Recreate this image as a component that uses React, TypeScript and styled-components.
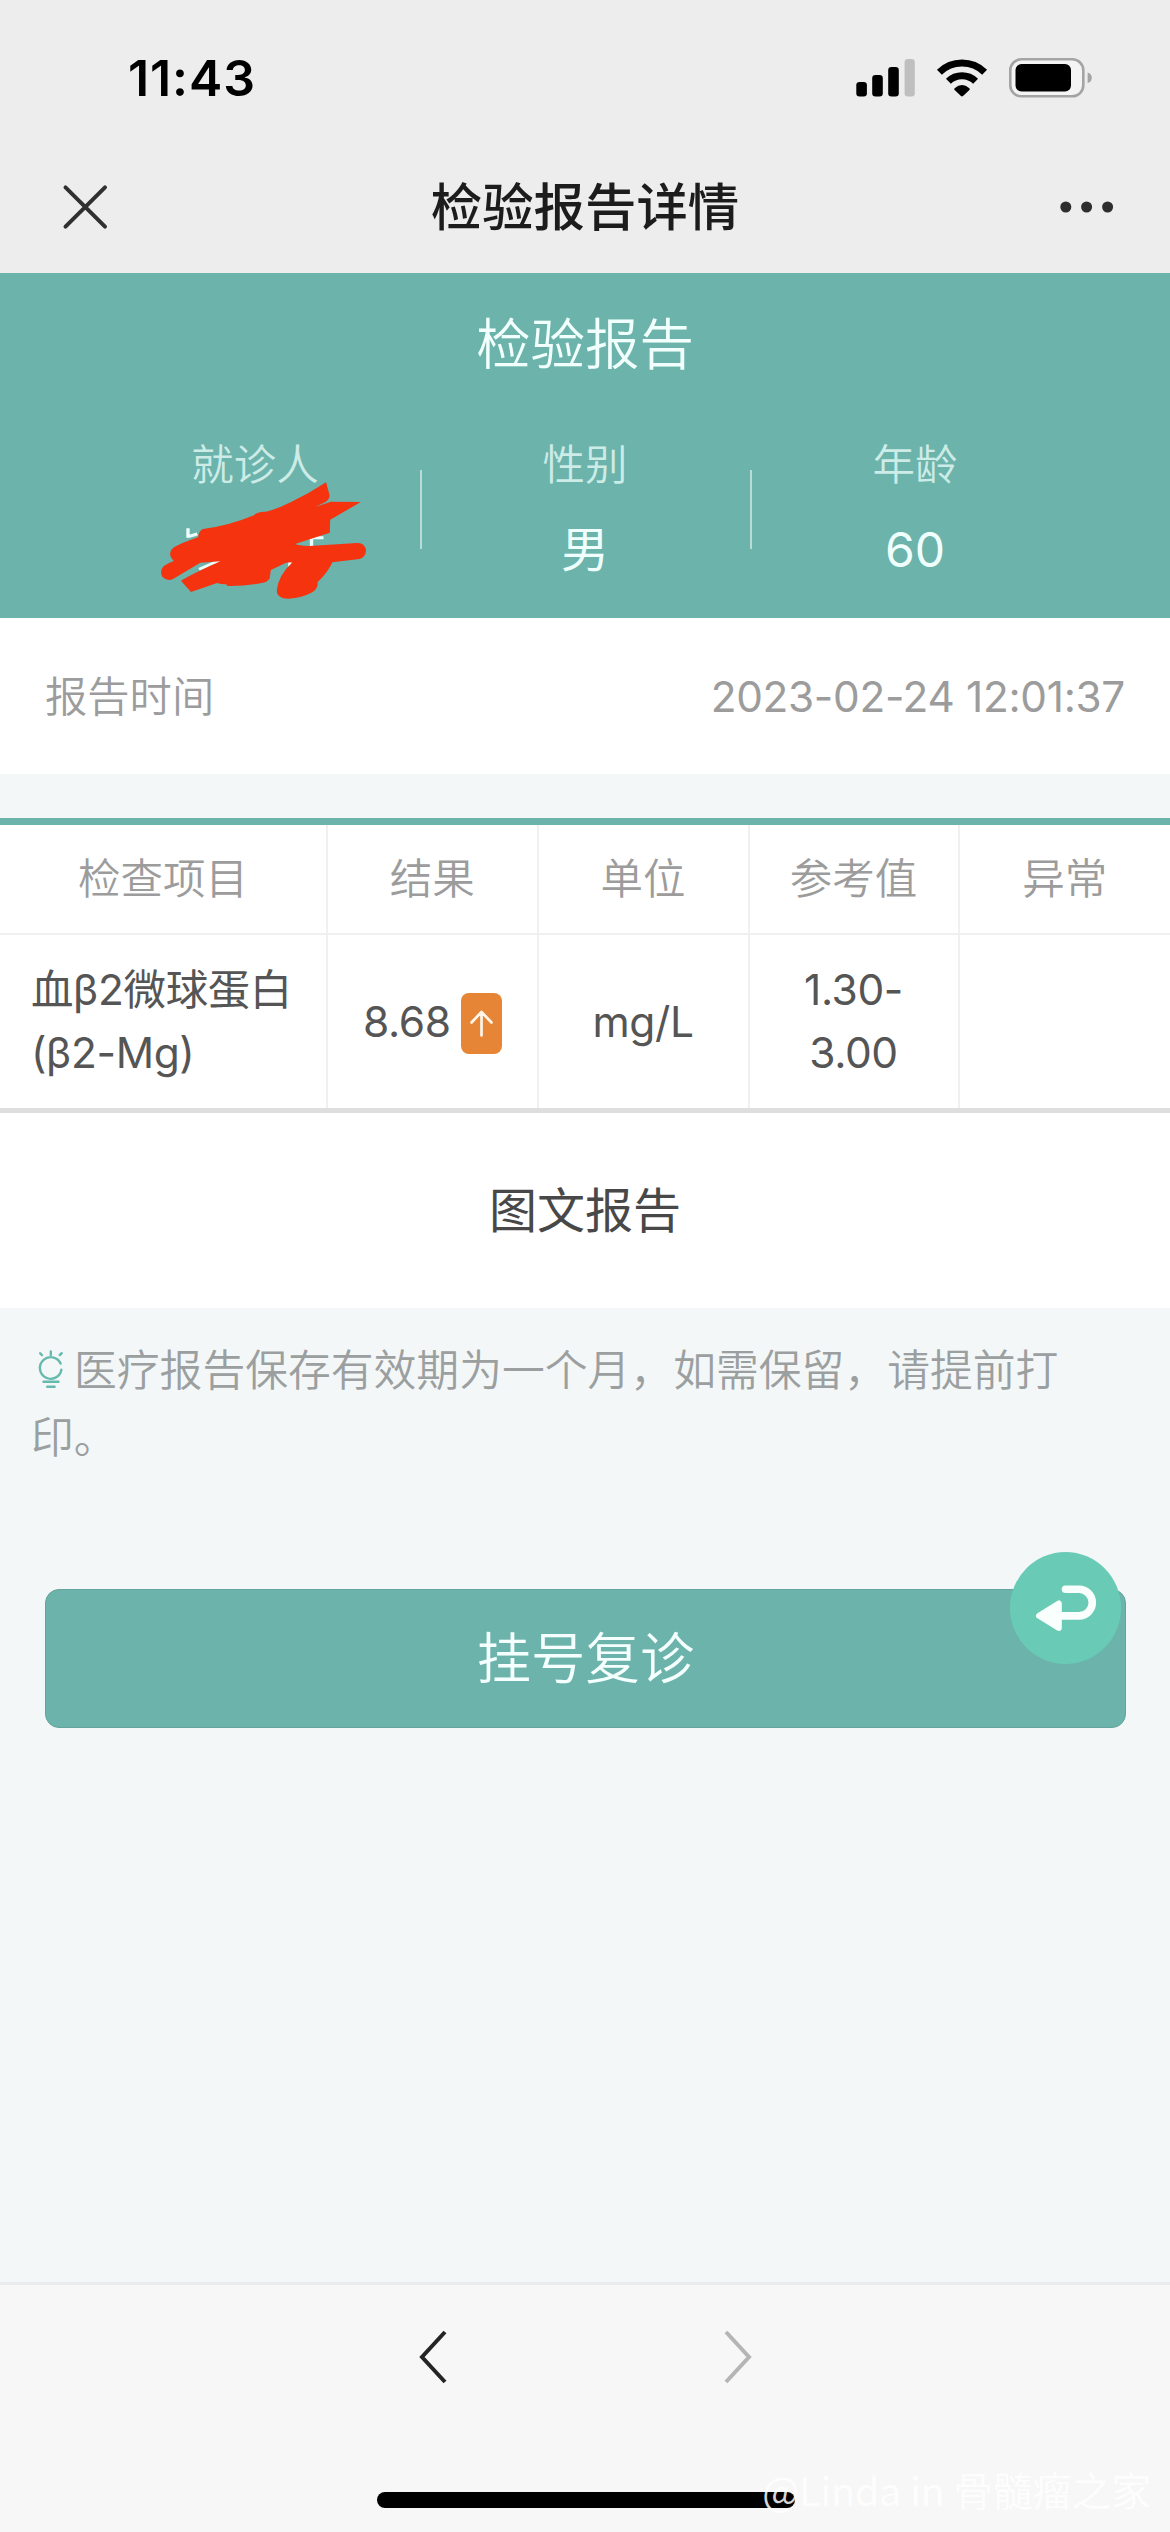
import React from "react";
import styled, { createGlobalStyle } from "styled-components";

const teal = "#6bb3ab";
const cjk = `Inter, "Noto Sans CJK SC", sans-serif`;

const GlobalStyle = createGlobalStyle`
  * { box-sizing: border-box; }
  body { margin: 0; background: #f3f7f8; font-family: ${cjk}; }
`;

const Page = styled.main`
  position: relative;
  display: flex;
  flex-direction: column;
  width: 1170px;
  height: 2532px;
  overflow: hidden;
  background: #f3f7f8;
`;

const TopArea = styled.header`
  height: 273px;
  background: #ededed;
`;

const StatusBar = styled.div`
  display: flex;
  align-items: center;
  justify-content: space-between;
  height: 156px;
  padding: 0 78px 0 128px;
`;

const Clock = styled.time`
  font-size: 50px;
  font-weight: 600;
  line-height: 60px;
  letter-spacing: 0.9px;
  color: #000;
`;

const StatusIcons = styled.svg`
  display: block;
  width: 236px;
  height: 40px;
`;

const TitleBar = styled.div`
  display: grid;
  grid-template-columns: 180px 1fr 180px;
  align-items: center;
  height: 102px;
`;

const CloseIcon = styled.svg`
  width: 46px;
  height: 46px;
  margin-left: 62px;
`;

const DotsIcon = styled.svg`
  width: 54px;
  height: 14px;
  justify-self: end;
  margin-right: 56px;
`;

const PageTitle = styled.h1`
  margin: 0;
  text-align: center;
  font-size: 51.4px;
  font-weight: 500;
  line-height: 70px;
  color: #1c1c1c;
`;

const Patient = styled.section`
  position: relative;
  display: flex;
  flex-direction: column;
  height: 345px;
  padding: 36px 90px 0;
  background: ${teal};
`;

const PatientTitle = styled.h2`
  margin: 0;
  text-align: center;
  font-size: 54.4px;
  font-weight: 350;
  line-height: 70px;
  color: #f1fffd;
`;

const PatientGrid = styled.div`
  display: grid;
  grid-template-columns: repeat(3, 330px);
  margin-top: 56px;
`;

const PatientField = styled.div`
  position: relative;
  display: flex;
  flex-direction: column;
  align-items: center;
  height: 150px;

  & + &::before {
    content: "";
    position: absolute;
    left: 0;
    top: 35px;
    width: 2px;
    height: 79px;
    background: #b9dcd7;
  }
`;

const FieldLabel = styled.span`
  font-size: 42.5px;
  font-weight: 350;
  line-height: 60px;
  color: #cdebe7;
`;

const FieldValue = styled.span`
  margin-top: 25px;
  font-size: 48px;
  line-height: 60px;
  color: #effffd;
`;

const Redaction = styled.svg`
  position: absolute;
  left: 160px;
  top: 207px;
  width: 209px;
  height: 120px;
`;

const TimeRow = styled.div`
  display: flex;
  align-items: center;
  justify-content: space-between;
  height: 156px;
  padding: 2px 45px 0;
  font-size: 42.3px;
  line-height: 60px;
  color: #9c9c9c;
  background: #fff;
`;

const Stamp = styled.span`
  letter-spacing: -0.3px;
`;

const CjkLight = styled.span`
  font-weight: 350;
`;

const Table = styled.div`
  display: grid;
  grid-template-columns: 328px 210.5px 211px 210px 210.5px;
  grid-template-rows: 110px 173px;
  margin-top: 44px;
  height: 295px;
  border-top: 7px solid ${teal};
  border-bottom: 5px solid #dedede;
  background: #fff;
`;

const Cell = styled.div<{ $head?: boolean; $left?: boolean }>`
  display: flex;
  align-items: center;
  justify-content: ${(p) => (p.$left ? "flex-start" : "center")};
  padding: ${(p) => (p.$left ? "1px 0 0 31px" : "1px 0 0")};
  text-align: ${(p) => (p.$left ? "left" : "center")};
  font-size: 42.5px;
  font-weight: ${(p) => (p.$head ? 350 : 400)};
  line-height: 62.7px;
  letter-spacing: ${(p) => (p.$head ? "0" : "-0.4px")};
  color: ${(p) => (p.$head ? "#9c9c9c" : "#555")};
  border-right: 2px solid #f0f0f0;
  border-bottom: ${(p) => (p.$head ? "2px solid #f0f0f0" : "0")};

  &:nth-child(5n) { border-right: 0; }
`;

const HighBadge = styled.span`
  display: flex;
  align-items: center;
  justify-content: center;
  width: 41px;
  height: 61px;
  margin: 3px 0 0 10px;
  border-radius: 8px;
  background: #e78536;
`;

const ImageReport = styled.div`
  display: flex;
  align-items: center;
  justify-content: center;
  height: 195px;
  font-size: 48px;
  line-height: 60px;
  color: #484848;
  background: #fff;
`;

const Tip = styled.p`
  margin: 30px 32px 0 31px;
  font-size: 42.8px;
  font-weight: 350;
  line-height: 66.5px;
  color: #9b9fa0;
  height: 133px;
`;

const BulbIcon = styled.svg`
  width: 28px;
  height: 40px;
  margin: 0 9px 0 6px;
  vertical-align: -4px;
`;

const Actions = styled.div`
  position: relative;
  margin: 118px 44px 0 45px;
`;

const BookButton = styled.button`
  display: block;
  width: 100%;
  height: 139px;
  padding: 0;
  border: 1px solid #64a49d;
  border-radius: 14px;
  background: ${teal};
  color: #f4fffe;
  font-family: inherit;
  font-size: 54.4px;
  font-weight: 350;
  line-height: 135px;
`;

const BackBubble = styled.div`
  position: absolute;
  right: 5px;
  top: -37px;
  width: 111px;
  height: 112px;
  border-radius: 50%;
  background: #69cbb5;
`;

const BottomBar = styled.footer`
  display: flex;
  flex-direction: column;
  align-items: center;
  height: 250px;
  margin-top: auto;
  border-top: 3px solid #ebecee;
  background: #f7f7f7;
`;

const NavArrows = styled.div`
  display: flex;
  justify-content: space-between;
  width: 335px;
  margin: 44px 0 0 1px;
`;

const Chevron = styled.svg`
  display: block;
  width: 31px;
  height: 56px;
`;

const HomeIndicator = styled.div`
  width: 418px;
  height: 16px;
  margin: 107px 0 0 2px;
  border-radius: 8px;
  background: #000;
`;

const Watermark = styled.div`
  position: absolute;
  right: 19px;
  bottom: 13px;
  font-family: "Noto Sans CJK SC", sans-serif;
  font-size: 39.5px;
  font-weight: 350;
  line-height: 60px;
  white-space: pre;
  color: rgba(255, 255, 255, 0.86);
`;

export default function App() {
  return (
    <Page lang="zh-CN">
      <GlobalStyle />
      <TopArea>
        <StatusBar>
          <Clock>11:43</Clock>
          <StatusIcons viewBox="856 58 236 40">
            <rect x="856.3" y="82" width="10.6" height="14.5" rx="3.2" />
            <rect x="872.2" y="75" width="10.6" height="21.5" rx="3.2" />
            <rect x="888.2" y="67" width="10.6" height="29.5" rx="3.2" />
            <rect x="904.6" y="59" width="10.2" height="37.5" rx="3.2" fill="#bfbfbf" />
            <g fill="none" stroke="#000" strokeWidth="7">
              <path d="M939.4 72.2a32.4 32.4 0 0 1 45.2 0" />
              <path d="M948.4 81.3a19.6 19.6 0 0 1 27.2 0" />
            </g>
            <path d="M954.6 88.2q7.4-6.4 14.8 0q.8 1 0 1.8l-6.4 6q-1 .9-2 0l-6.4-6q-.8-.8 0-1.8z" />
            <rect x="1010.3" y="59.3" width="73" height="37" rx="11" fill="#f4f4f4" stroke="#a4a4a4" strokeWidth="2.6" />
            <rect x="1015.5" y="64" width="55.5" height="27.5" rx="6" />
            <path d="M1087.6 72.5q4.2 1.2 4.2 5.3t-4.2 5.3z" fill="#a4a4a4" />
          </StatusIcons>
        </StatusBar>
        <TitleBar>
          <CloseIcon viewBox="62 184 46 46">
            <path d="M65.5 187.3 105 226.7M105 187.3 65.5 226.7" stroke="#303030" strokeWidth="4" strokeLinecap="round" />
          </CloseIcon>
          <PageTitle>检验报告详情</PageTitle>
          <DotsIcon viewBox="1060 200 54 14" fill="#2e2e2e">
            <circle cx="1065.8" cy="207" r="5.5" />
            <circle cx="1086.6" cy="207" r="5.5" />
            <circle cx="1107.6" cy="207" r="5.5" />
          </DotsIcon>
        </TitleBar>
      </TopArea>

      <Patient>
        <PatientTitle>检验报告</PatientTitle>
        <PatientGrid>
          <PatientField>
            <FieldLabel>就诊人</FieldLabel>
          </PatientField>
          <PatientField>
            <FieldLabel>性别</FieldLabel>
            <FieldValue>男</FieldValue>
          </PatientField>
          <PatientField>
            <FieldLabel>年龄</FieldLabel>
            <FieldValue>60</FieldValue>
          </PatientField>
        </PatientGrid>
        <Redaction viewBox="430 630 560 360" preserveAspectRatio="none">
          <path d="M505 775V803M505 800 530 792M800 803H868M836 806V830M535 898 592 870M778 875V890" fill="none" stroke="#effffd" strokeWidth="9" />
          <path
            fill="#f5330f"
            d="M875 637 884 674Q886 688 872 697L846 711 888 695 968 696 886 749 885 788 792 822Q800 827 830 828L958 819Q980 818 982 843Q980 863 964 867L892 877Q880 907 852 937Q855 955 838 967Q810 984 775 986Q742 986 743 960Q748 915 785 877L768 878 727 900 724 925Q718 937 702 939Q655 949 611 948L607 943Q592 943 583 939L513 966 486 932Q530 904 592 874L538 878 466 926Q450 936 436 920Q428 903 440 888Q452 879 467 873Q450 854 462 837Q475 824 532 802Q534 782 545 777Q610 769 682 736Q690 724 714 725Q742 718 780 697Q830 670 875 637Z"
          />
        </Redaction>
      </Patient>

      <TimeRow>
        <CjkLight>报告时间</CjkLight>
        <Stamp>2023-02-24 12:01:37</Stamp>
      </TimeRow>

      <Table>
        <Cell $head>检查项目</Cell>
        <Cell $head>结果</Cell>
        <Cell $head>单位</Cell>
        <Cell $head>参考值</Cell>
        <Cell $head>异常</Cell>
        <Cell $left>
          血β2微球蛋白
          <br />
          (β2-Mg)
        </Cell>
        <Cell>
          8.68
          <HighBadge>
            <svg width="23" height="27" viewBox="0 0 23 27" fill="none" stroke="#fff6ea" strokeWidth="2.7" strokeLinecap="round" strokeLinejoin="round">
              <path d="M11.5 25.5V2M1.5 12.5 11.5 2l10 10.5" />
            </svg>
          </HighBadge>
        </Cell>
        <Cell>mg/L</Cell>
        <Cell>
          1.30-
          <br />
          3.00
        </Cell>
        <Cell />
      </Table>

      <ImageReport>图文报告</ImageReport>

      <Tip>
        <BulbIcon viewBox="0 0 28 40" fill="none" stroke="#66b9ad" strokeWidth="2.4" strokeLinecap="round">
          <path d="M23.6 13.6A10.8 10.8 0 1 0 24.4 19.6M13.8 1.5V5M3.2 3.2 5 5.2M24.8 3.2 22.8 5M6.5 31.7h15M10.2 36.7h7.4" />
        </BulbIcon>
        医疗报告保存有效期为一个月，如需保留，请提前打印。
      </Tip>

      <Actions>
        <BookButton type="button">挂号复诊</BookButton>
        <BackBubble>
          <svg width="111" height="112" viewBox="0 0 111 112">
            <path d="M55.5 37.3H69a13.3 13.3 0 0 1 0 26.6H50" fill="none" stroke="#f8fffd" strokeWidth="7.6" strokeLinecap="round" />
            <path d="M29 63.8 48.8 51.5V76Z" fill="#f8fffd" stroke="#f8fffd" strokeWidth="6" strokeLinejoin="round" />
          </svg>
        </BackBubble>
      </Actions>

      <BottomBar>
        <NavArrows>
          <Chevron viewBox="0 0 31 56" fill="none" stroke="#242424" strokeWidth="4">
            <path d="M27 3 4 28 27 53" />
          </Chevron>
          <Chevron viewBox="0 0 31 56" fill="none" stroke="#b5b5b5" strokeWidth="4">
            <path d="M4 3 27 28 4 53" />
          </Chevron>
        </NavArrows>
        <HomeIndicator />
      </BottomBar>
      <Watermark>@Linda in 骨髓瘤之家</Watermark>
    </Page>
  );
}
